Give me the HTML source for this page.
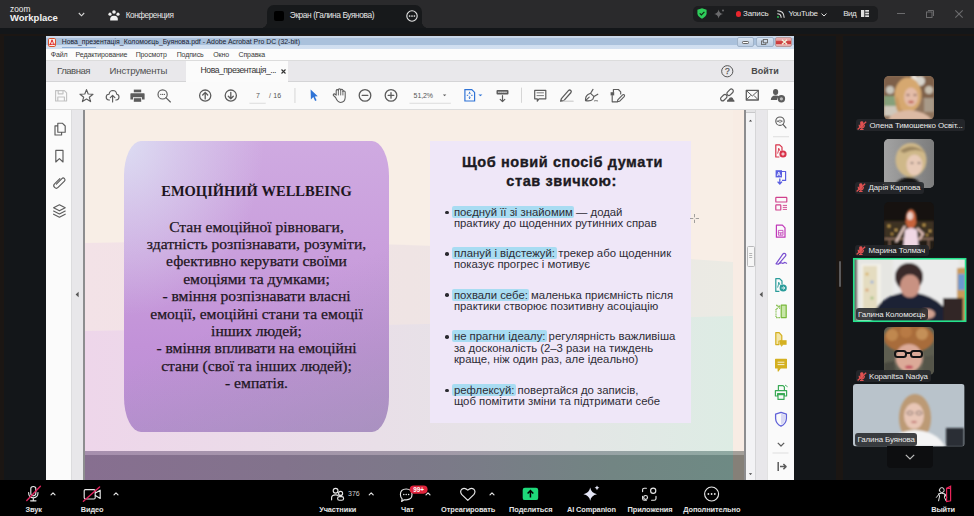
<!DOCTYPE html>
<html><head><meta charset="utf-8">
<style>
*{margin:0;padding:0;box-sizing:border-box}
html,body{width:974px;height:516px;overflow:hidden;background:#131619;font-family:"Liberation Sans",sans-serif;position:relative}
.a{position:absolute}
.t{position:absolute;line-height:1;white-space:nowrap}
svg{position:absolute;overflow:visible}
#top{left:0;top:0;width:974px;height:28px;background:#2a2a2c}
#brownh{left:0;top:34px;width:974px;height:2px;background:#1b1613}
#brownl{left:0;top:34px;width:4px;height:446px;background:#1b1613}
#brownr{left:836px;top:34px;width:7px;height:446px;background:#1b1613}
#bottom{left:0;top:480px;width:974px;height:36px;background:#000}
#acro{left:46px;top:36px;width:748px;height:444px;background:#fafafa;overflow:hidden}
.tw{color:#e6e6e6}
.bl{font-size:11.35px;line-height:11.2px;color:#2e2c36}
.hl{background:#a8dcf2;border-radius:2px;padding:0 1.5px;margin:0 -1.5px}
</style></head><body>
<!-- ============ TOP BAR ============ -->
<div id="top" class="a">
  <span class="t tw" style="left:10px;top:4.7px;font-size:8.3px;letter-spacing:0px;color:#f0f0f0">zoom</span>
  <span class="t" style="left:10px;top:13.3px;font-size:9.5px;font-weight:bold;color:#f2f2f2">Workplace</span>
  <svg style="left:78px;top:12px" width="7" height="5" viewBox="0 0 7 5"><path d="M0.8 1 L3.5 3.8 L6.2 1" fill="none" stroke="#d8d8d8" stroke-width="1.1"/></svg>
  <svg style="left:108px;top:10px" width="12" height="11" viewBox="0 0 12 11">
    <circle cx="6" cy="2" r="1.8" fill="#f0f0f0"/><circle cx="2" cy="4.2" r="1.6" fill="#f0f0f0"/><circle cx="10" cy="4.2" r="1.6" fill="#f0f0f0"/>
    <path d="M2.2 10.5 Q1.5 6 6 5.8 Q10.5 6 9.8 10.5 Z" fill="#f0f0f0"/>
  </svg>
  <span class="t tw" style="left:125.7px;top:12px;font-size:8.2px;letter-spacing:-0.42px">Конференция</span>
  <!-- tab -->
  <div class="a" style="left:267px;top:5px;width:155px;height:23px;background:#17191b;border-radius:7px 7px 0 0"></div>
  <div class="a" style="left:260px;top:21px;width:7px;height:7px;background:radial-gradient(circle at 0 0,#2a2a2c 7px,#17191b 7.5px)"></div>
  <div class="a" style="left:422px;top:21px;width:7px;height:7px;background:radial-gradient(circle at 100% 0,#2a2a2c 7px,#17191b 7.5px)"></div>
  <div class="a" style="left:274px;top:11px;width:10px;height:9.5px;background:#000;border-radius:2px"></div>
  <span class="t tw" style="left:289.8px;top:11.4px;font-size:8.4px;letter-spacing:-0.43px">Экран (Галина Буянова)</span>
  <svg style="left:406px;top:10px" width="12" height="12" viewBox="0 0 12 12"><circle cx="6" cy="6" r="5.2" fill="none" stroke="#e6e6e6" stroke-width="1.1"/><circle cx="3.6" cy="6" r="0.85" fill="#e6e6e6"/><circle cx="6" cy="6" r="0.85" fill="#e6e6e6"/><circle cx="8.4" cy="6" r="0.85" fill="#e6e6e6"/></svg>
  <!-- right pill -->
  <div class="a" style="left:693px;top:6px;width:185px;height:16px;background:#1c1d1f;border-radius:5px"></div>
  <svg style="left:697px;top:8px" width="10" height="11" viewBox="0 0 10 11"><path d="M5 0.3 L9.6 1.8 L9.6 5.3 Q9.4 8.8 5 10.7 Q0.6 8.8 0.4 5.3 L0.4 1.8 Z" fill="#2ecc5a"/><path d="M2.7 5.3 L4.4 7 L7.4 3.8" fill="none" stroke="#0f2a16" stroke-width="1.2"/></svg>
  <svg style="left:714px;top:9px" width="11" height="10" viewBox="0 0 11 10"><path d="M4.6 0.5 Q5.2 4.4 9 5 Q5.2 5.6 4.6 9.6 Q4 5.6 0.2 5 Q4 4.4 4.6 0.5Z" fill="#6a6a6c"/><circle cx="9" cy="1.5" r="1" fill="#6a6a6c"/></svg>
  <div class="a" style="left:736px;top:11.3px;width:5.4px;height:5.4px;border-radius:50%;background:#e8262d"></div>
  <span class="t tw" style="left:743px;top:10px;font-size:8px;letter-spacing:-0.1px">Запись</span>
  <svg style="left:777px;top:10px" width="8" height="8" viewBox="0 0 8 8"><circle cx="1" cy="7" r="0.9" fill="#2ecc5a"/><path d="M0.3 3.8 Q4 3.8 4.2 7.7 M0.3 0.8 Q7 0.8 7.2 7.7" fill="none" stroke="#e0e0e0" stroke-width="1.1"/></svg>
  <span class="t tw" style="left:788.4px;top:10px;font-size:8px;letter-spacing:-0.3px">YouTube</span>
  <svg style="left:821px;top:12.5px" width="6" height="4" viewBox="0 0 6 4"><path d="M0.5 0.6 L3 3 L5.5 0.6" fill="none" stroke="#e0e0e0" stroke-width="1"/></svg>
  <span class="t tw" style="left:843.2px;top:10px;font-size:8px;letter-spacing:-0.5px">Вид</span>
  <svg style="left:861px;top:10px" width="8" height="7" viewBox="0 0 8 7"><rect x="0" y="0" width="3.3" height="7" fill="#e0e0e0"/><rect x="4.2" y="0" width="3.8" height="1.7" fill="#e0e0e0"/><rect x="4.2" y="2.6" width="3.8" height="1.8" fill="#e0e0e0"/><rect x="4.2" y="5.3" width="3.8" height="1.7" fill="#e0e0e0"/></svg>
  <!-- window controls -->
  <div class="a" style="left:897px;top:13px;width:8px;height:1px;background:#6b6b6d"></div>
  <svg style="left:926px;top:9.5px" width="8" height="8" viewBox="0 0 8 8"><rect x="0.5" y="2" width="5.5" height="5.5" fill="none" stroke="#6b6b6d"/><path d="M2 0.5 L7.5 0.5 L7.5 6" fill="none" stroke="#6b6b6d"/></svg>
  <svg style="left:955px;top:9.5px" width="8" height="8" viewBox="0 0 8 8"><path d="M0.3 0.3 L7.7 7.7 M7.7 0.3 L0.3 7.7" stroke="#6b6b6d" stroke-width="1.1"/></svg>
</div>
<div id="brownh" class="a"></div>
<div id="brownl" class="a"></div>
<div id="brownr" class="a"></div>
<!-- ============ ACROBAT ============ -->
<div id="acro" class="a"></div>
<!-- title bar -->
<div class="a" style="left:46px;top:36px;width:748px;height:13px;background:linear-gradient(#c9d7e9 0,#c9d7e9 1.5px,#aac1dc 2px,#aac1dc 8.5px,#cfdef0 9px,#d3e0f0 13px)"></div>
<div class="a" style="left:62px;top:46.5px;width:34px;height:1.5px;background:#8fb0d8"></div>
<svg style="left:48px;top:37.5px" width="8" height="9" viewBox="0 0 8 9"><rect x="0.5" y="0.5" width="7" height="8" rx="1.2" fill="#fbeee8" stroke="#d9532c" stroke-width="1"/><path d="M4 1.8 Q4.6 4.3 6.6 6.6 Q4 5.6 1.6 6.8 Q3.4 4.6 4 1.8Z" fill="none" stroke="#e0262b" stroke-width="1"/></svg>
<span class="t" style="left:61.7px;top:38.6px;font-size:6.9px;color:#1a2230">Нова_презентація_Коломоєць_Буянова.pdf - Adobe Acrobat Pro DC (32-bit)</span>
<div class="a" style="left:736.5px;top:37.2px;width:17px;height:9.5px;border:1px solid #9fb2c8;border-radius:2px;background:linear-gradient(#d6e2f0,#bccde2)"></div>
<div class="a" style="left:741.5px;top:41.2px;width:7px;height:2.4px;background:#fff;border:0.7px solid #666;border-radius:1.2px"></div>
<div class="a" style="left:755.5px;top:37.2px;width:18px;height:9.5px;border:1px solid #9fb2c8;border-radius:2px;background:linear-gradient(#d6e2f0,#bccde2)"></div>
<svg style="left:761px;top:38.8px" width="7" height="6" viewBox="0 0 7 6"><rect x="0.5" y="2" width="4.3" height="3.5" fill="none" stroke="#666" stroke-width="0.9"/><rect x="2.3" y="0.5" width="4.2" height="3.3" fill="#d0dcea" stroke="#666" stroke-width="0.9"/></svg>
<div class="a" style="left:775.3px;top:37.2px;width:17px;height:9.5px;border:1px solid #b89a9a;border-radius:2px;background:linear-gradient(#eab0b0 0,#e6a0a0 30%,#d04848 36%,#cc3a3a 70%,#e49a9a 76%,#eab8b8 100%)"></div>
<svg style="left:780.5px;top:38.7px" width="7" height="6" viewBox="0 0 7 6"><path d="M1 0.8 L6 5.2 M6 0.8 L1 5.2" stroke="#f2f2dc" stroke-width="1.4"/></svg>
<!-- menu bar -->
<div class="a" style="left:46px;top:49px;width:748px;height:11px;background:#fcfcfc"></div>
<span class="t" style="left:50.8px;top:50.9px;font-size:7px;color:#3a3a3a;letter-spacing:-0.1px">Файл</span>
<span class="t" style="left:75.6px;top:50.9px;font-size:7px;color:#3a3a3a;letter-spacing:-0.12px">Редактирование</span>
<span class="t" style="left:135.7px;top:50.9px;font-size:7px;color:#3a3a3a;letter-spacing:-0.12px">Просмотр</span>
<span class="t" style="left:176.7px;top:50.9px;font-size:7px;color:#3a3a3a;letter-spacing:-0.12px">Подпись</span>
<span class="t" style="left:213.2px;top:50.9px;font-size:7px;color:#3a3a3a;letter-spacing:-0.12px">Окно</span>
<span class="t" style="left:238.5px;top:50.9px;font-size:7px;color:#3a3a3a;letter-spacing:-0.12px">Справка</span>
<!-- tab bar -->
<div class="a" style="left:46px;top:60px;width:748px;height:22px;background:#e9e8eb;border-top:1px solid #dcdcdc;border-bottom:1px solid #d4d4d6"></div>
<span class="t" style="left:57px;top:66.4px;font-size:9.6px;color:#505050;letter-spacing:-0.5px">Главная</span>
<span class="t" style="left:109.6px;top:66.4px;font-size:9.6px;color:#505050;letter-spacing:-0.2px">Инструменты</span>
<div class="a" style="left:185.7px;top:61px;width:102.6px;height:21px;background:#fbfbfb"></div>
<span class="t" style="left:200.6px;top:66.4px;font-size:8.6px;color:#333;letter-spacing:-0.45px">Нова_презентація_...</span>
<svg style="left:280.6px;top:69px" width="5" height="5" viewBox="0 0 5 5"><path d="M0.5 0.5 L4.5 4.5 M4.5 0.5 L0.5 4.5" stroke="#333" stroke-width="1.1"/></svg>
<svg style="left:720.7px;top:64.9px" width="12.5" height="12.5" viewBox="0 0 12.5 12.5"><circle cx="6.25" cy="6.25" r="5.6" fill="none" stroke="#555" stroke-width="1"/><text x="6.25" y="9.2" font-size="8.4" font-family="Liberation Sans" text-anchor="middle" fill="#555" stroke="#555" stroke-width="0.25">?</text></svg>
<span class="t" style="left:751.2px;top:67.3px;font-size:9px;font-weight:bold;color:#4a4a4a;letter-spacing:0px">Войти</span>
<!-- toolbar -->
<div class="a" style="left:46px;top:82px;width:748px;height:27px;background:#fafafa"></div>

<!-- toolbar icons -->
<svg style="left:0;top:0" width="974" height="516" viewBox="0 0 974 516">
<g fill="none" stroke="#5c5c5c" stroke-width="1.15" stroke-linejoin="round" stroke-linecap="round">
 <!-- save -->
 <path d="M55.6 90.6 H64.4 L66.6 92.8 V101 H55.6 Z M58.2 90.8 V93.8 H63 V90.8 M57.8 100.8 V97 H64.4 V100.8" stroke="#c2c2c2"/>
 <!-- star -->
 <path d="M86.5 89.6 L88.2 94 L93 94.2 L89.3 97.2 L90.6 101.6 L86.5 99 L82.4 101.6 L83.7 97.2 L80 94.2 L84.8 94 Z"/>
 <!-- cloud upload -->
 <path d="M109.5 100 H108.8 Q106.2 99.8 106.2 97 Q106.3 94.4 109 94.3 Q109.6 90.6 112.8 90.5 Q116.3 90.6 116.7 94.2 Q119 94.5 119 97 Q118.9 99.8 116.3 100 H115.8"/>
 <path d="M112.6 102 V95.5 M110.3 97.6 L112.6 95.3 L114.9 97.6"/>
 <!-- search dots -->
 <circle cx="162.6" cy="94.4" r="4.6"/><path d="M165.9 97.7 L170.4 102"/>
 <!-- up/down circles -->
 <circle cx="205.2" cy="95.6" r="5.6" stroke-width="1.3"/><path d="M205.2 98.9 V92.5 M202.7 95 L205.2 92.4 L207.7 95" stroke-width="1.3"/>
 <circle cx="230.8" cy="95.6" r="5.6" stroke-width="1.3"/><path d="M230.8 92.3 V98.7 M228.3 96.2 L230.8 98.8 L233.3 96.2" stroke-width="1.3"/>
 <!-- minus plus -->
 <circle cx="365" cy="95.4" r="5.8" stroke-width="1.3"/><path d="M362.2 95.4 H367.8" stroke-width="1.3"/>
 <circle cx="391" cy="95.4" r="5.8" stroke-width="1.3"/><path d="M388.2 95.4 H393.8 M391 92.6 V98.2" stroke-width="1.3"/>
 <!-- hand -->
 <path d="M335.6 97.5 L333.6 95.6 Q332.8 94.6 333.8 94 Q334.6 93.6 335.6 94.6 L336.2 95.2 V90.6 Q336.4 89.6 337.4 89.6 Q338.3 89.7 338.4 90.6 V89.6 Q338.6 88.7 339.6 88.7 Q340.6 88.8 340.7 89.7 V90 Q341 89.2 341.9 89.3 Q342.8 89.4 342.9 90.3 V91.5 Q343.2 90.8 344.1 90.9 Q345.2 91.1 345.2 92.2 V97.6 Q345 102.3 340.5 102.4 Q337.6 102.3 335.6 97.5 Z" stroke-width="1.05"/>
 <path d="M338.4 90.6 V95 M340.7 90 V95 M342.9 91.5 V95" stroke-width="0.9"/>
 <!-- read mode -->
 <rect x="496.5" y="89.9" width="12" height="4.6" rx="1" fill="#5c5c5c" stroke="none"/>
 <path d="M498.3 92.2 H506.7" stroke="#fafafa" stroke-width="0.9" stroke-dasharray="1 0.8"/>
 <path d="M502.5 95.6 V101.6 M500.2 99.4 L502.5 101.7 L504.8 99.4" stroke-width="1.2"/>
 <!-- comment -->
 <path d="M534.7 90.3 H545.8 V98.8 H539 L537.3 101.2 V98.8 H534.7 Z" stroke-width="1.2"/>
 <path d="M537 92.8 H543.5 M537 95.6 H543.5" stroke-width="0.8"/>
 <!-- highlight pen -->
 <path d="M561.4 98.6 L568.4 90.6 Q569.6 89.4 570.8 90.5 Q571.8 91.6 570.8 92.8 L563.8 100.6 L560.6 101.2 Z" stroke-width="1.3"/>
 <path d="M564 101.2 L573 101.2" stroke="#d6d6d6" stroke-width="1.6"/>
 <!-- fountain pen -->
 <path d="M585.5 100.6 Q585.3 96.4 588 94.6 L590.6 93.3 L594 96.6 L592.8 99.3 Q590.6 101.5 585.5 100.6 Z M590.6 93.3 L593 89.4 M594 96.6 L597.8 94.2 M585.8 100.4 L589.2 97.1" stroke-width="1.15"/>
 <path d="M594.2 101 Q595.2 99.6 596 101 Q597 99.8 597.8 101" stroke-width="0.8"/>
 <!-- stamp doc -->
 <path d="M613.4 92.2 V89.5 H618.4 L620.7 91.8 V94 M612.2 95.6 V101.8 H617.6 M619.5 101.3 L624.4 96.3 Q624.9 95.5 624.1 94.8 Q623.3 94.2 622.6 94.9 L617.8 99.8 L617.4 101.8 Z" stroke-width="1.15"/>
 <rect x="610.6" y="92.2" width="3.6" height="3.2" fill="#5c5c5c" stroke="none"/>
 <!-- mail -->
 <rect x="746.3" y="90.4" width="12" height="9.6" stroke-width="1.3"/><path d="M746.6 90.8 L752.3 96 L758 90.8 M746.6 99.6 L750.3 95.8 M758 99.6 L754.3 95.8" stroke-width="1"/>
 <!-- link -->
 <rect x="-3.7" y="-2" width="7.4" height="4" rx="2" transform="translate(723.8 97.6) rotate(-45)" stroke-width="1.2"/><rect x="-3.7" y="-2" width="7.4" height="4" rx="2" transform="translate(730.1 92.3) rotate(-45)" stroke-width="1.2"/>
</g>
<g fill="#5c5c5c">
 <!-- printer -->
 <path d="M133.8 89.6 H141.2 V92.3 H133.8 Z"/>
 <path d="M131 93.2 H144 Q144.6 93.2 144.6 93.9 V99.6 H142 V97.3 H133 V99.6 H130.4 V93.9 Q130.4 93.2 131 93.2 Z"/>
 <path d="M133.8 98.2 H141.2 V101.8 H133.8 Z"/>
 <circle cx="160.8" cy="94.4" r="0.65"/><circle cx="162.6" cy="94.4" r="0.65"/><circle cx="164.4" cy="94.4" r="0.65"/>
 <!-- link cloud -->
 <path d="M727 101.8 Q726.6 99.5 728.6 99.3 Q729.2 97.2 731.3 97.3 Q733.2 97.5 733.4 99.4 Q734.6 99.7 734.5 101.8 Z"/>
 <!-- person plus -->
 <ellipse cx="775.6" cy="92" rx="2.6" ry="2.9"/>
 <path d="M770.8 100 Q770.8 95.6 775.6 95.4 Q778.4 95.5 779.4 96.6 Q777.2 97.6 777 100 Z"/>
 <circle cx="781.4" cy="98.8" r="3.7"/>
 <!-- dropdown carets -->
 <path d="M442.9 94.4 H446.3 L444.6 96.2 Z"/>
</g>
<circle cx="781.4" cy="98.8" r="1.6" fill="#bdbdbd"/>
<path d="M478.4 94.4 H482.4 L480.4 96.3 Z" fill="#2f73d6"/>
<!-- cursor -->
<path d="M310.6 89.6 L317.8 96.2 L314.8 96.4 L316.6 100.2 L315.1 100.9 L313.3 97 L310.9 99.4 Z" fill="#2f73d6"/>
<!-- fit page -->
<path d="M464.9 89.6 H471.8 L474.6 92.4 V101 H464.9 Z" fill="none" stroke="#2f73d6" stroke-width="1.2"/>
<path d="M469.6 91.8 V93.4 M469.6 97.2 V99 M466.8 95.3 H468.2 M471.1 95.3 H472.6" stroke="#2f73d6" stroke-width="1"/>
<path d="M468.7 93.2 L469.6 94.1 L470.5 93.2 M468.7 97.4 L469.6 96.5 L470.5 97.4" fill="none" stroke="#2f73d6" stroke-width="0.8"/>
<!-- separators, underlines -->
<rect x="294.5" y="88" width="0.9" height="15" fill="#d2d2d2"/>
<rect x="521" y="87.6" width="0.9" height="15.2" fill="#d2d2d2"/>
<rect x="249.4" y="102.8" width="16.3" height="0.8" fill="#d4d4d4"/>
<rect x="409.5" y="102.8" width="41.3" height="0.8" fill="#d4d4d4"/>
</svg>
<span class="t" style="left:255.9px;top:91.9px;font-size:7px;color:#555">7</span>
<span class="t" style="left:269px;top:91.9px;font-size:7px;color:#555;letter-spacing:0.15px">/ 16</span>
<span class="t" style="left:413.6px;top:91.9px;font-size:7px;color:#555;letter-spacing:-0.1px">51,2%</span>
<!-- panels -->
<div class="a" style="left:46px;top:109px;width:25px;height:371px;background:#fbfbfb"></div>
<div class="a" style="left:71px;top:109px;width:12px;height:371px;background:#e8e7ea;border-left:1px solid #dcdcde"></div>
<div class="a" style="left:83px;top:109px;width:2px;height:371px;background:#8d8d8f"></div>
<div class="a" style="left:744px;top:109px;width:2px;height:371px;background:#8d8d8f"></div>
<div class="a" style="left:746px;top:109px;width:10px;height:371px;background:#f3f3f5;border-right:1px solid #d6d6d8"></div>
<div class="a" style="left:746px;top:109px;width:9px;height:4px;background:#e4e4e6;border-bottom:1px solid #c8c8ca"></div>
<div class="a" style="left:756px;top:109px;width:11px;height:371px;background:#e8e7ea"></div>
<div class="a" style="left:767px;top:109px;width:27px;height:371px;background:#fafafa;border-left:1px solid #e2e2e2"></div>
<div class="a" style="left:746.5px;top:245.5px;width:8.5px;height:21.5px;background:#f6f6f6;border:1px solid #b8b8ba;border-radius:1.5px"></div>
<svg style="left:0;top:0" width="974" height="516" viewBox="0 0 974 516">
 <path d="M748.9 121.6 L752.1 121.6 L750.5 119.8 Z" fill="#444"/>
 <path d="M748.9 473.2 L752.1 473.2 L750.5 475 Z" fill="#444"/>
 <path d="M749.2 253.5 H752.2 M749.2 255.5 H752.2 M749.2 257.5 H752.2" stroke="#999" stroke-width="0.7"/>
 <path d="M78.6 291.8 V297.2 L75.6 294.5 Z" fill="#555"/>
 <path d="M762.6 291.8 V297.2 L759.6 294.5 Z" fill="#555"/>
 <g fill="none" stroke="#5c5c5c" stroke-width="1.15" stroke-linejoin="round" stroke-linecap="round">
  <!-- left panel icons -->
  <path d="M57.8 125.8 H55 V135 H61.6 V132.2 M57.8 123.2 H62.3 L65.2 126 V132.2 H57.8 Z"/>
  <path d="M55.8 150.4 H63 V162 L59.4 158.6 L55.8 162 Z"/>
  <path transform="translate(58.8 183.2) rotate(45) translate(-3.5 -8.5)" d="M1 4.5 V12 A2.5 2.5 0 0 0 6 12 V3 A1.8 1.8 0 0 0 2.4 3 V10.8"/>
  <path d="M59.4 204.8 L65.2 207.8 L59.4 210.8 L53.6 207.8 Z M53.6 211 L59.4 214 L65.2 211 M53.6 214.2 L59.4 217.2 L65.2 214.2"/>
  <!-- right panel search -->
  <circle cx="780" cy="121.2" r="4.2"/><path d="M783 124.4 L786 127.8"/>
  <path d="M777.6 121.2 Q780 118.8 782.4 121.2 Q780 123.6 777.6 121.2Z" stroke-width="0.8"/>
 </g>
 <rect x="773" y="136.4" width="16" height="0.8" fill="#d6d6d6"/>
 <rect x="772.5" y="452.6" width="16" height="0.8" fill="#d6d6d6"/>
 <!-- right tool icons -->
 <g fill="none" stroke-width="1.2" stroke-linejoin="round">
  <path d="M782 150.8 V147.2 L779.6 144.8 H775.8 V157 H779.4" stroke="#d8334a"/>
  <path d="M777.6 153.6 Q778.6 151 778.7 148.2 Q779.8 151.2 781.3 152.3" stroke="#d8334a" stroke-width="0.9"/>
  <circle cx="783" cy="154" r="3.6" fill="#d8334a" stroke="none"/>
  <path d="M781.3 154 H784.7 M783 152.3 V155.7" stroke="#fff" stroke-width="0.9"/>
  <rect x="775.6" y="170.2" width="6.4" height="7.2" fill="#5a5ee0" stroke="none"/>
  <path d="M781.5 171.5 H785.6 V180.4 H782" stroke="#5a5ee0"/>
  <path d="M777.2 176 L778.8 172 L780.4 176 M777.8 174.8 H779.8" stroke="#fff" stroke-width="0.8"/>
  <path d="M779.8 178.4 V183.8 M777.6 181.6 L779.8 184 L782 181.6" stroke="#5a5ee0" stroke-width="1.3"/>
  <rect x="775.8" y="197.4" width="11" height="4.6" rx="0.6" stroke="#d0408c"/>
  <rect x="775.8" y="204.8" width="5" height="5.2" rx="0.6" stroke="#d0408c"/>
  <path d="M782.8 205.4 H787 M782.8 207.4 H787 M782.8 209.4 H787" stroke="#d0408c" stroke-width="0.9"/>
  <path d="M776.4 225.2 H782.4 L785 227.8 V237.2 H776.4 Z" stroke="#c038b8"/>
  <path d="M778.4 230.4 H783 V235.2 H778.4 Z M778.4 232.8 H783 M780.7 232.8 V235.2" stroke="#c038b8" stroke-width="0.8"/>
  <path d="M776 263.8 L782.8 254.2 Q784 252.6 785.4 253.8 Q786.4 255 785.2 256.4 L778.6 264.2 Z M778.2 264 Q781 262.6 782 263 Q782.6 263.8 784.6 262.4 Q785.4 262.6 787 263.6" stroke="#7a4fd0"/>
  <path d="M782 284.4 V281 L779.6 278.6 H775.8 V291.4 H779.4" stroke="#2a9c9a"/>
  <path d="M777.6 287.6 Q778.6 285 778.7 282.2 Q779.8 285.2 781.3 286.3" stroke="#2a9c9a" stroke-width="0.9"/>
  <circle cx="783.2" cy="288" r="3.6" fill="#2a9c9a" stroke="none"/>
  <path d="M781.5 288 H784.7 M783.3 286.6 L784.8 288 L783.3 289.4" stroke="#fff" stroke-width="0.9"/>
  <path d="M781.2 305.2 H786.2 V317.6 H781.2 Z" stroke="#78b83a" fill="#c8e6a8"/>
  <path d="M776 309 V317.6 H780 M776 305.2 H778.4 M776.6 309 L779.6 306 M776.8 306 H779.6 V308.8" stroke="#78b83a" stroke-dasharray="1.4 0.8" stroke-width="1.1"/>
  <path d="M781.8 341 V335.6 L779.2 332.6 H775.8 V344.6 H779 V341 Z" stroke="#d4b020" fill="#f4e6a8"/>
  <rect x="780" y="340.2" width="6.6" height="4.6" fill="#d4b020" stroke="none"/>
  <path d="M781 344.6 L781.4 346.2 L783 344.6" fill="#d4b020" stroke="#d4b020" stroke-width="0.8"/>
  <path d="M775.6 359.4 H786.4 V368 H780.4 L778.2 371 V368 H775.6 Z" fill="#d4b020" stroke="#d4b020"/>
  <path d="M777.6 362.2 H784.4 M777.6 364.6 H784.4" stroke="#fff" stroke-width="0.8"/>
  <path d="M778.4 390.4 V385.6 H783 L784.4 387 V390.4 M775.4 390.6 H786.6 V396 H784.4 V393.6 H777.6 V396 H775.4 Z M778 394.6 H784 V399.4 H778 Z" stroke="#3aaa56" fill="none"/>
  <path d="M785 385 L787.6 386.8" stroke="#3aaa56" stroke-width="0.9"/>
  <path d="M781 412.4 L786.4 414.2 V418.4 Q786.2 423.6 781 426.2 Q775.8 423.6 775.6 418.4 V414.2 Z" stroke="#6062d8" stroke-width="1.3"/>
  <path d="M781 413.6 V425" stroke="#6062d8" stroke-width="0"/>
  <path d="M777.8 442.8 L781 446 L784.2 442.8" stroke="#5c5c5c" stroke-width="1.2"/>
  <path d="M778.2 462 V471 M780 466.6 H786 M783.4 464 L786 466.6 L783.4 469.2" stroke="#5c5c5c" stroke-width="1.5"/>
 </g>
 <path d="M781 413.6 L785.2 415 V418.4 Q785 422.6 781 424.8 Z" fill="#d8d8f4"/>
</svg>
<!-- ============ SLIDE ============ -->
<div class="a" id="slide" style="left:85px;top:109px;width:659px;height:371px;background:#f8eee6;overflow:hidden">
 <svg style="left:0;top:0" width="659" height="371" viewBox="0 0 659 371">
  <defs>
   <linearGradient id="lowA" x1="0" y1="0" x2="1" y2="0">
    <stop offset="0" stop-color="#f3e2e7"/><stop offset="0.5" stop-color="#efe4e4"/><stop offset="0.85" stop-color="#ece8e4"/><stop offset="1" stop-color="#ebebe4"/>
   </linearGradient>
   <linearGradient id="lowB" x1="0" y1="0" x2="1" y2="0">
    <stop offset="0" stop-color="#eed6ea"/><stop offset="0.45" stop-color="#e9dfe8"/><stop offset="0.75" stop-color="#e4e6e6"/><stop offset="1" stop-color="#ddece4"/>
   </linearGradient>
   <linearGradient id="cardg" x1="0" y1="0" x2="1" y2="1">
    <stop offset="0" stop-color="#dcdcf2"/><stop offset="0.28" stop-color="#d2b4e2"/><stop offset="0.55" stop-color="#c597d9"/><stop offset="0.8" stop-color="#b48fcd"/><stop offset="1" stop-color="#a493bb"/>
   </linearGradient>
   <radialGradient id="cardr" cx="0.05" cy="0.05" r="0.5">
    <stop offset="0" stop-color="#e2e2f4" stop-opacity="0.8"/><stop offset="1" stop-color="#e2e2f4" stop-opacity="0"/>
   </radialGradient>
  </defs>
  <path d="M0 134 Q300 128 648 153 V342 H0 Z" fill="url(#lowA)"/>
  <path d="M0 222 Q330 216 648 207 V342 H0 Z" fill="url(#lowB)"/>
  <rect x="648" y="0" width="11" height="371" fill="#f8ece4"/>
  <rect x="345" y="32" width="261" height="282" fill="#efe7f8"/>
 </svg>
<div class="a" style="left:39px;top:32px;width:265px;height:291px;border-radius:17px/35px;background:radial-gradient(ellipse 140px 175px at 0 0,rgba(221,223,243,0.95) 0%,rgba(221,223,243,0.55) 40%,rgba(221,223,243,0) 100%),linear-gradient(155deg,rgba(150,150,170,0) 55%,rgba(150,150,170,0.45) 100%),linear-gradient(180deg,#cfaae1 0%,#c99edc 40%,#c292d8 70%,#b98ed2 100%)"></div>
 <div class="t" style="left:39px;width:265px;top:74.5px;text-align:center;font-family:'Liberation Serif',serif;font-weight:bold;font-size:14.5px;color:#1d1520">ЕМОЦІЙНИЙ WELLBEING</div>
 <div class="a" style="left:39px;width:265px;top:108.65px;text-align:center;font-family:'Liberation Serif',serif;font-size:15.6px;line-height:17.37px;color:#1e1622;-webkit-text-stroke:0.25px #1e1622;white-space:nowrap">Стан емоційної рівноваги,<br>здатність розпізнавати, розуміти,<br>ефективно керувати своїми<br>емоціями та думками;<br>- вміння розпізнавати власні<br>емоції, емоційні стани та емоції<br>інших людей;<br>- вміння впливати на емоційні<br>стани (свої та інших людей);<br>- емпатія.</div>
 <div class="a" style="left:360.1px;top:101.6px;width:3.6px;height:3.6px;border-radius:50%;background:#2a2a30"></div>
 <span class="t bl" style="left:368.9px;top:97.7px"><span class="hl">поєднуй її зі знайомим</span> — додай</span>
 <span class="t bl" style="left:368.9px;top:108.5px">практику до щоденних рутинних справ</span>
 <div class="a" style="left:360.1px;top:143.2px;width:3.6px;height:3.6px;border-radius:50%;background:#2a2a30"></div>
 <span class="t bl" style="left:368.9px;top:139.3px"><span class="hl">плануй і відстежуй:</span> трекер або щоденник</span>
 <span class="t bl" style="left:368.9px;top:150.1px">показує прогрес і мотивує</span>
 <div class="a" style="left:360.1px;top:184.4px;width:3.6px;height:3.6px;border-radius:50%;background:#2a2a30"></div>
 <span class="t bl" style="left:368.9px;top:180.5px"><span class="hl">похвали себе:</span> маленька приємність після</span>
 <span class="t bl" style="left:368.9px;top:191.7px">практики створює позитивну асоціацію</span>
 <div class="a" style="left:360.1px;top:226.2px;width:3.6px;height:3.6px;border-radius:50%;background:#2a2a30"></div>
 <span class="t bl" style="left:368.9px;top:222.3px"><span class="hl">не прагни ідеалу:</span> регулярність важливіша</span>
 <span class="t bl" style="left:368.9px;top:233.8px">за досконалість (2–3 рази на тиждень</span>
 <span class="t bl" style="left:368.9px;top:245.3px">краще, ніж один раз, але ідеально)</span>
 <div class="a" style="left:360.1px;top:279.9px;width:3.6px;height:3.6px;border-radius:50%;background:#2a2a30"></div>
 <span class="t bl" style="left:368.9px;top:276.0px"><span class="hl">рефлексуй:</span> повертайся до записів,</span>
 <span class="t bl" style="left:368.9px;top:287.2px">щоб помітити зміни та підтримати себе</span>
 <svg style="left:605px;top:104.5px" width="9" height="9" viewBox="0 0 9 9"><path d="M4.5 0 V3.3 M4.5 5.7 V9 M0 4.5 H3.3 M5.7 4.5 H9" stroke="#8a8a8a" stroke-width="0.8"/></svg>
 <div class="a" style="left:0;top:342px;width:659px;height:29px;background:linear-gradient(90deg,#876f90 0%,#82738c 30%,#7b7a88 55%,#728583 80%,#6e8a84 98.3%,#858078 98.3%)"></div>
 <div class="a" style="left:0;top:342px;width:659px;height:4px;background:linear-gradient(90deg,#a78fae 0%,#a29aa8 55%,#8fa9a2 98.3%,#a4a09a 98.3%)"></div>
 <div class="a" style="left:376.3px;width:200px;top:44.4px;text-align:center;font-weight:bold;font-size:14.5px;line-height:18.4px;color:#1c1a22;white-space:nowrap;letter-spacing:0.6px;padding-left:0.6px;-webkit-text-stroke:0.35px #1c1a22">Щоб новий спосіб думати<br>став звичкою:</div>
</div>

<div class="a" style="left:46px;top:109px;width:748px;height:1px;background:#dcdcdc"></div>
<!-- ============ GALLERY ============ -->
<svg style="left:884px;top:76px" width="50" height="44" viewBox="0 0 50 44"><defs><clipPath id="c1"><rect width="50" height="44" rx="5"/></clipPath><filter id="bl" x="-20%" y="-20%" width="140%" height="140%"><feGaussianBlur stdDeviation="1.2"/></filter><filter id="bl2" x="-20%" y="-20%" width="140%" height="140%"><feGaussianBlur stdDeviation="0.8"/></filter></defs>
<g clip-path="url(#c1)"><rect width="50" height="44" fill="#8e735c"/>
<g filter="url(#bl2)"><rect x="0" y="0" width="50" height="22" fill="#7e6048"/><circle cx="36" cy="5" r="5" fill="#d8d4cc"/><circle cx="45" cy="14" r="4" fill="#c8bfb0"/><circle cx="6" cy="14" r="4" fill="#c9c6bc"/><circle cx="30" cy="2" r="3" fill="#e8e4dc"/><rect x="0" y="20" width="14" height="11" fill="#86a07a"/><rect x="0" y="30" width="16" height="10" fill="#cfc8bc"/><rect x="40" y="22" width="10" height="14" fill="#a89a88"/>
<ellipse cx="24" cy="19" rx="13.5" ry="17.5" fill="#d6a870"/><path d="M12 20 Q10 36 18 38 L14 22 Z" fill="#c8985e"/><ellipse cx="27" cy="21" rx="7" ry="9.5" fill="#e4bca8"/><path d="M4 44 Q8 35 25 34 Q42 35 48 44 Z" fill="#dcbaa4"/><ellipse cx="27" cy="26" rx="3" ry="1.2" fill="#c05a50"/><ellipse cx="24" cy="19" rx="1.6" ry="0.8" fill="#6a4a40"/><ellipse cx="31" cy="19" rx="1.6" ry="0.8" fill="#6a4a40"/></g></g></svg>
<div class="a" style="left:855.9px;top:119.1px;width:108.89999999999998px;height:11.599999999999994px;background:rgba(38,40,43,0.88);border-radius:3px"></div><svg style="left:857.1999999999999px;top:120.69999999999999px" width="10" height="9" viewBox="0 0 10 9"><path d="M3.2 1.6 Q3.2 0.2 4.8 0.2 Q6.4 0.2 6.4 1.6 V4.4 Q6.4 5.9 4.8 5.9 Q3.2 5.9 3.2 4.4 Z" fill="#e05252"/><path d="M2.2 3.8 Q2.2 6.8 4.8 6.8 Q7.4 6.8 7.4 3.8 M4.8 6.8 V8.4 M3 8.5 H6.6" fill="none" stroke="#e05252" stroke-width="1.2"/><path d="M0.6 8.6 L9.2 0.8" stroke="#e05252" stroke-width="1.3"/></svg><span class="t" style="left:869.4px;top:121.9px;font-size:7.9px;color:#ebebeb;letter-spacing:-0.08px">Олена Тимошенко Освіт...</span>
<svg style="left:884px;top:139px" width="50" height="49" viewBox="0 0 50 49"><defs><clipPath id="c2"><rect width="50" height="49" rx="5"/></clipPath></defs>
<g clip-path="url(#c2)"><rect width="50" height="49" fill="#8f8f8f"/><rect width="50" height="49" fill="url(#g2)"/>
<linearGradient id="g2" x1="0" y1="0" x2="1" y2="0"><stop offset="0" stop-color="#a3a3a3"/><stop offset="1" stop-color="#7c7c7c"/></linearGradient>
<g filter="url(#bl)"><ellipse cx="27" cy="21" rx="15.5" ry="17" fill="#cfb889"/><ellipse cx="30.5" cy="26" rx="8" ry="10.5" fill="#e8cbb8"/><path d="M10 49 Q12 40 24 38 Q34 38 38 49 Z" fill="#121212"/><path d="M16 12 Q28 2 42 14 Q32 8 20 14 Z" fill="#9c8660"/><ellipse cx="28" cy="24" rx="1.6" ry="0.8" fill="#6a5a58"/><ellipse cx="35" cy="24" rx="1.6" ry="0.8" fill="#6a5a58"/></g></g></svg>
<div class="a" style="left:855px;top:181.6px;width:69px;height:12.099999999999994px;background:rgba(38,40,43,0.88);border-radius:3px"></div><svg style="left:856.3px;top:183.2px" width="10" height="9" viewBox="0 0 10 9"><path d="M3.2 1.6 Q3.2 0.2 4.8 0.2 Q6.4 0.2 6.4 1.6 V4.4 Q6.4 5.9 4.8 5.9 Q3.2 5.9 3.2 4.4 Z" fill="#e05252"/><path d="M2.2 3.8 Q2.2 6.8 4.8 6.8 Q7.4 6.8 7.4 3.8 M4.8 6.8 V8.4 M3 8.5 H6.6" fill="none" stroke="#e05252" stroke-width="1.2"/><path d="M0.6 8.6 L9.2 0.8" stroke="#e05252" stroke-width="1.3"/></svg><span class="t" style="left:868.5px;top:184.4px;font-size:7.9px;color:#ebebeb;letter-spacing:-0.08px">Дарія Карпова</span>
<svg style="left:884px;top:202px" width="50" height="48" viewBox="0 0 50 48"><defs><clipPath id="c3"><rect width="50" height="48" rx="5"/></clipPath></defs>
<g clip-path="url(#c3)"><rect width="50" height="48" fill="#161210"/>
<g filter="url(#bl2)"><rect x="0" y="19" width="50" height="16" fill="#3e3222"/><circle cx="5" cy="24" r="1.5" fill="#c8a050"/><circle cx="12" cy="28" r="1.2" fill="#d8b060"/><circle cx="40" cy="23" r="1.5" fill="#c8a050"/><circle cx="46" cy="29" r="1.2" fill="#d8b060"/><circle cx="8" cy="32" r="1.2" fill="#b89048"/><circle cx="43" cy="33" r="1.2" fill="#b89048"/><rect x="0" y="35" width="50" height="13" fill="#201a16"/><rect x="0" y="36" width="50" height="1.6" fill="#9a7a64"/><rect x="5" y="36" width="1.2" height="12" fill="#8a6a58"/><rect x="44" y="36" width="1.2" height="12" fill="#8a6a58"/>
<ellipse cx="27" cy="17" rx="5.5" ry="10" fill="#c8643a"/><ellipse cx="26" cy="14" rx="3" ry="4" fill="#ecd0c8"/><path d="M19 48 L21 28 Q27 24 33 28 L35 48 Z" fill="#f0d8e4"/><path d="M12 40 L21 24" stroke="#ecd0c8" stroke-width="2.2"/><path d="M33 26 L39 32 L35 38" stroke="#ecc8c0" stroke-width="2" fill="none"/></g></g></svg>
<div class="a" style="left:855px;top:244.6px;width:74px;height:11.400000000000006px;background:rgba(38,40,43,0.88);border-radius:3px"></div><svg style="left:856.3px;top:246.2px" width="10" height="9" viewBox="0 0 10 9"><path d="M3.2 1.6 Q3.2 0.2 4.8 0.2 Q6.4 0.2 6.4 1.6 V4.4 Q6.4 5.9 4.8 5.9 Q3.2 5.9 3.2 4.4 Z" fill="#e05252"/><path d="M2.2 3.8 Q2.2 6.8 4.8 6.8 Q7.4 6.8 7.4 3.8 M4.8 6.8 V8.4 M3 8.5 H6.6" fill="none" stroke="#e05252" stroke-width="1.2"/><path d="M0.6 8.6 L9.2 0.8" stroke="#e05252" stroke-width="1.3"/></svg><span class="t" style="left:868.5px;top:247.4px;font-size:7.9px;color:#ebebeb;letter-spacing:-0.08px">Марина Толмач</span>
<svg style="left:852.7px;top:257.7px" width="113.3" height="64" viewBox="0 0 113.3 64"><defs><clipPath id="c4"><rect width="113.3" height="64"/></clipPath></defs>
<g clip-path="url(#c4)"><rect width="113.3" height="64" fill="#e6e6e2"/>
<g filter="url(#bl)"><rect x="0" y="0" width="4" height="64" fill="#6a6a66"/><rect x="8" y="6" width="20" height="50" fill="#f2f0e8"/><rect x="10" y="8" width="14" height="44" fill="#e4dcc0"/><circle cx="14" cy="16" r="1.6" fill="#d8b060"/><circle cx="19" cy="24" r="1.6" fill="#9ab0d8"/><circle cx="14" cy="32" r="1.6" fill="#d8a070"/><circle cx="19" cy="40" r="1.6" fill="#a0c080"/><rect x="40" y="0" width="66" height="64" fill="#ebebeb"/><rect x="104" y="10" width="9.3" height="54" fill="#c89a5a"/><rect x="105" y="16" width="7" height="16" fill="#6a9ad0"/>
<path d="M18 64 Q24 36 56 34 Q88 36 100 64 Z" fill="#1a2036"/><ellipse cx="56" cy="19" rx="14" ry="14" fill="#3a2c2c"/><ellipse cx="57" cy="28" rx="10" ry="11.5" fill="#c99282"/><rect x="90" y="40" width="20" height="24" fill="#302828"/><ellipse cx="74" cy="56" rx="8" ry="5" fill="#d0a090"/></g></g>
<rect x="0.75" y="0.75" width="111.8" height="62.5" fill="none" stroke="#23e38c" stroke-width="1.6"/></svg>
<div class="a" style="left:855.5px;top:308px;width:72.5px;height:11.600000000000023px;background:rgba(38,40,43,0.88);border-radius:3px"></div><span class="t" style="left:858.0px;top:310.8px;font-size:7.9px;color:#ebebeb;letter-spacing:-0.08px">Галина Коломоєць</span>
<svg style="left:884.2px;top:327px" width="50" height="48" viewBox="0 0 50 48"><defs><clipPath id="c5"><rect width="50" height="48" rx="5"/></clipPath></defs>
<g clip-path="url(#c5)"><rect width="50" height="48" fill="#5e5e50"/>
<g filter="url(#bl2)"><ellipse cx="25" cy="11" rx="25" ry="15" fill="#a86c3a"/><circle cx="8" cy="8" r="6" fill="#c08850"/><circle cx="22" cy="5" r="6" fill="#b87a44"/><circle cx="38" cy="7" r="6" fill="#c49058"/><ellipse cx="25" cy="31" rx="13.5" ry="14" fill="#dcaa98"/><ellipse cx="25" cy="40" rx="4" ry="1.6" fill="#c04058"/><path d="M0 36 L10 34 L12 48 H0Z" fill="#4a4a40"/><path d="M40 30 L50 28 V48 H38Z" fill="#55554a"/></g><g fill="none" stroke="#141414" stroke-width="2"><rect x="11" y="24" width="11" height="6" rx="2.5"/><rect x="27" y="24" width="11" height="6" rx="2.5"/><path d="M22 26 H27"/></g></g></svg>
<div class="a" style="left:855.5px;top:370.4px;width:75.10000000000002px;height:11.400000000000034px;background:rgba(38,40,43,0.88);border-radius:3px"></div><svg style="left:856.8px;top:372.0px" width="10" height="9" viewBox="0 0 10 9"><path d="M3.2 1.6 Q3.2 0.2 4.8 0.2 Q6.4 0.2 6.4 1.6 V4.4 Q6.4 5.9 4.8 5.9 Q3.2 5.9 3.2 4.4 Z" fill="#e05252"/><path d="M2.2 3.8 Q2.2 6.8 4.8 6.8 Q7.4 6.8 7.4 3.8 M4.8 6.8 V8.4 M3 8.5 H6.6" fill="none" stroke="#e05252" stroke-width="1.2"/><path d="M0.6 8.6 L9.2 0.8" stroke="#e05252" stroke-width="1.3"/></svg><span class="t" style="left:869.0px;top:373.2px;font-size:7.9px;color:#ebebeb;letter-spacing:-0.08px">Kopanitsa Nadya</span>
<svg style="left:853px;top:383.5px" width="111.6" height="62.5" viewBox="0 0 111.6 62.5"><defs><clipPath id="c6"><rect width="111.6" height="62.5" rx="3"/></clipPath></defs>
<g clip-path="url(#c6)"><rect width="111.6" height="62.5" fill="#b9c3cb"/>
<g filter="url(#bl)"><ellipse cx="62" cy="34" rx="16" ry="24" fill="#bc9a74"/><ellipse cx="61" cy="32" rx="10" ry="13" fill="#e8c6b6"/><path d="M34 62.5 Q40 47 62 46 Q84 47 92 62.5 Z" fill="#f4f4f4"/><ellipse cx="57" cy="29" rx="3" ry="1.8" fill="none" stroke="#6a5a58" stroke-width="0.8"/><ellipse cx="66" cy="29" rx="3" ry="1.8" fill="none" stroke="#6a5a58" stroke-width="0.8"/><ellipse cx="61" cy="38" rx="3" ry="1" fill="#c07070"/><rect x="93" y="44" width="18" height="19" fill="#2a2e34"/></g></g></svg>
<div class="a" style="left:855px;top:433.4px;width:62px;height:12.300000000000011px;background:rgba(38,40,43,0.88);border-radius:3px"></div><span class="t" style="left:857.5px;top:436.2px;font-size:7.9px;color:#ebebeb;letter-spacing:-0.08px">Галина Буянова</span>
<div class="a" style="left:886.5px;top:446px;width:46.2px;height:22px;background:#0d0e10;border-radius:0 0 4px 4px"></div>
<svg style="left:904.5px;top:453.6px" width="10" height="6" viewBox="0 0 10 6"><path d="M0.8 0.8 L5 5 L9.2 0.8" fill="none" stroke="#bdbdbd" stroke-width="1.2"/></svg>
<div class="a" style="left:838.5px;top:261px;width:2.5px;height:26px;background:#5a5a5c;border-radius:1px"></div>
<!-- ============ BOTTOM ============ -->
<div id="bottom" class="a"></div>
<svg style="left:0;top:480px" width="974" height="36" viewBox="0 480 974 36">
<g fill="none" stroke="#e6e6e6" stroke-width="1.15" stroke-linecap="round" stroke-linejoin="round">
 <!-- mic -->
 <path d="M30.8 488.6 Q30.8 486.5 33.3 486.5 Q35.8 486.5 35.8 488.6 V493.6 Q35.8 495.8 33.3 495.8 Q30.8 495.8 30.8 493.6 Z"/>
 <path d="M28.6 492.6 Q28.6 497.8 33.3 497.8 Q38 497.8 38 492.6 M33.3 498 V500.8 M30.6 500.8 H36"/>
 <!-- carets -->
 <path d="M51 494.8 L53 492.8 L55 494.8 M114 494.8 L116 492.8 L118 494.8 M369.2 494.8 L371.2 492.8 L373.2 494.8 M426 494.8 L428 492.8 L430 494.8 M490 494.8 L492 492.8 L494 494.8"/>
 <!-- video -->
 <rect x="84.2" y="489.6" width="11" height="9.4" rx="1.2"/>
 <path d="M95.4 493 L100.2 490.2 V498.4 L95.4 495.6"/>
 <!-- participants -->
 <circle cx="335.6" cy="490.8" r="2.4"/><path d="M331.6 499.8 V497.8 Q331.6 494.8 335.6 494.8 Q337.2 494.8 338.2 495.4"/>
 <circle cx="340.6" cy="493.4" r="2"/><rect x="337.6" y="496.6" width="6" height="3.6" rx="1.8"/>
 <!-- chat -->
 <path d="M400.4 494.6 Q400.4 489 406.2 489 Q412 489 412 494.6 Q412 499.8 406.2 499.8 H404.2 L401.6 501.4 L402.2 499 Q400.4 497.6 400.4 494.6 Z"/>
 <!-- heart -->
 <path d="M467.8 500.4 L461.6 494.4 Q459.6 491.6 461.8 489.2 Q464.6 487 467.8 490.2 Q471 487 473.8 489.2 Q476 491.6 474 494.4 Z"/>
 <!-- apps -->
 <path d="M646.4 488.2 H644.2 Q642.6 488.2 642.6 489.8 V491.6 M642.6 496.4 V498.4 Q642.6 500.2 644.2 500.2 H646.4 M651.6 500.2 H654.2 Q656 500.2 656 498.4 V496.4"/>
 <circle cx="653.2" cy="490.8" r="2.6"/><circle cx="645.6" cy="497.4" r="1.9"/>
 <!-- more -->
 <circle cx="711.6" cy="494" r="7"/>
 <!-- leave person -->
 <path d="M939.4 490.2 Q939.4 487.6 941.8 487.6 Q944.2 487.6 944.2 490.2 Q944.2 492.6 941.8 492.6 Q939.4 492.6 939.4 490.2 Z M938.6 500.8 L939.6 496 L938.4 493.8 Q941.8 492.6 945.2 494 L944.4 497.2 L946 500.8 M939 494.2 L936.4 497.4 M945 494.4 L946.6 497.4" stroke-width="1"/>
</g>
<path d="M26.8 500.6 L40.4 486.2" stroke="#e0245e" stroke-width="1.4" stroke-linecap="round"/>
<path d="M83.4 501.2 L99.6 487" stroke="#e0245e" stroke-width="1.4" stroke-linecap="round"/>
<g fill="#e6e6e6"><circle cx="403.8" cy="494.6" r="0.75"/><circle cx="406.2" cy="494.6" r="0.75"/><circle cx="408.6" cy="494.6" r="0.75"/>
<circle cx="708.4" cy="494" r="0.9"/><circle cx="711.6" cy="494" r="0.9"/><circle cx="714.8" cy="494" r="0.9"/></g>
<rect x="409.7" y="485.4" width="17.9" height="8.3" rx="4.1" fill="#e0243c"/>
<text x="418.65" y="492" font-family="Liberation Sans" font-weight="bold" font-size="6.4" fill="#fff" text-anchor="middle">99+</text>
<rect x="522.7" y="487.8" width="15.5" height="12.3" rx="2.2" fill="#1ed97a"/>
<path d="M530.45 497.4 V491 M527.6 493.6 L530.45 490.6 L533.3 493.6" fill="none" stroke="#000" stroke-width="1.5"/>
<path d="M590.2 487.6 Q591.2 493.2 597 494.2 Q591.2 495.2 590.2 500.8 Q589.2 495.2 583.4 494.2 Q589.2 493.2 590.2 487.6 Z" fill="#e4e6f6"/>
<path d="M597 485.4 Q597.4 487.4 599.4 487.8 Q597.4 488.2 597 490.2 Q596.6 488.2 594.6 487.8 Q596.6 487.4 597 485.4 Z" fill="#e4e6f6"/>
<path d="M946.6 488.4 L950.6 486.2 V500.8 L946.6 501.6 Z" fill="none" stroke="#e8245a" stroke-width="1.2"/>
<path d="M946.6 488.4 H950.6" stroke="#e8245a" stroke-width="1.2"/>
</svg>
<span class="t" style="left:348px;top:490.2px;font-size:7px;color:#cfcfcf">376</span>
<div class="t" style="left:-6.399999999999999px;width:80px;top:505.9px;text-align:center;font-size:7.4px;font-weight:bold;color:#e4e4e4;letter-spacing:-0.1px">Звук</div>
<div class="t" style="left:52.2px;width:80px;top:505.9px;text-align:center;font-size:7.4px;font-weight:bold;color:#e4e4e4;letter-spacing:-0.1px">Видео</div>
<div class="t" style="left:297.7px;width:80px;top:505.9px;text-align:center;font-size:7.4px;font-weight:bold;color:#e4e4e4;letter-spacing:-0.1px">Участники</div>
<div class="t" style="left:367.4px;width:80px;top:505.9px;text-align:center;font-size:7.4px;font-weight:bold;color:#e4e4e4;letter-spacing:-0.1px">Чат</div>
<div class="t" style="left:428.2px;width:80px;top:505.9px;text-align:center;font-size:7.4px;font-weight:bold;color:#e4e4e4;letter-spacing:-0.1px">Отреагировать</div>
<div class="t" style="left:490.79999999999995px;width:80px;top:505.9px;text-align:center;font-size:7.4px;font-weight:bold;color:#e4e4e4;letter-spacing:-0.1px">Поделиться</div>
<div class="t" style="left:551.4px;width:80px;top:505.9px;text-align:center;font-size:7.4px;font-weight:bold;color:#e4e4e4;letter-spacing:-0.1px">AI Companion</div>
<div class="t" style="left:610px;width:80px;top:505.9px;text-align:center;font-size:7.4px;font-weight:bold;color:#e4e4e4;letter-spacing:-0.1px">Приложения</div>
<div class="t" style="left:671.8px;width:80px;top:505.9px;text-align:center;font-size:7.4px;font-weight:bold;color:#e4e4e4;letter-spacing:-0.1px">Дополнительно</div>
<div class="t" style="left:903.1px;width:80px;top:505.9px;text-align:center;font-size:7.4px;font-weight:bold;color:#e4e4e4;letter-spacing:-0.1px">Выйти</div>
</body></html>
